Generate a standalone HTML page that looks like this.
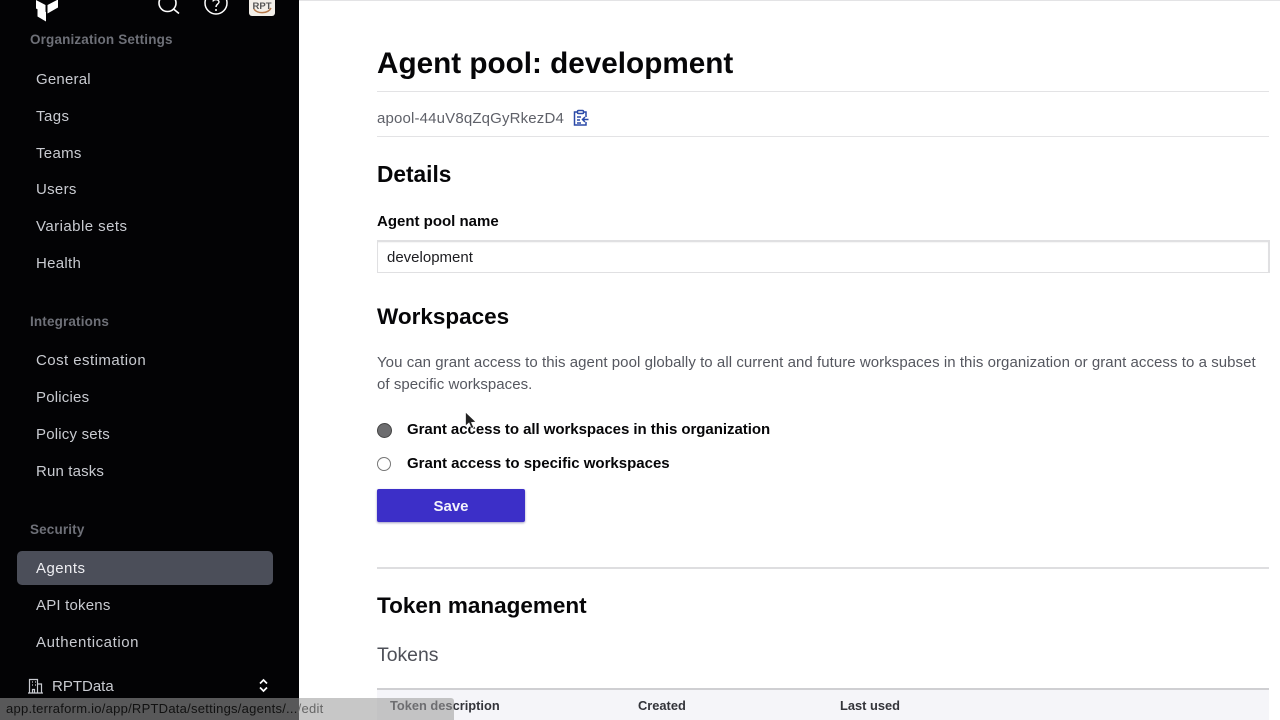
<!DOCTYPE html>
<html><head><meta charset="utf-8"><style>
html,body{margin:0;padding:0;width:1280px;height:720px;overflow:hidden;background:#fff;font-family:"Liberation Sans",Arial,sans-serif}
.t{position:absolute;white-space:nowrap;line-height:20px}
.s{color:#c9cbd1;font-size:15px;left:36px;letter-spacing:.45px}
.h{color:#6e7078;font-size:13.5px;font-weight:bold;left:30px;letter-spacing:.15px}
.b{font-weight:bold;color:#060608}
.l{position:absolute;background:#e3e3e5}
</style></head><body>
<div style="position:absolute;left:0;top:0;width:299px;height:720px;background:#030305"></div>
<svg style="position:absolute;left:0;top:0" width="299" height="24" viewBox="0 0 299 24">
<path d="M36 0L45.500 5V13.500L36 8.500Z" fill="#fff"/>
<path d="M47.500 5V13.500L58 7.500V0H57Z" fill="#fff"/>
<path d="M37.500 7.500L46 12V21.500L37.500 16.500Z" fill="#fff"/>
<circle cx="167.500" cy="3" r="8.500" fill="none" stroke="#fff" stroke-width="1.600"/><path d="M173.500 9L179 13.500" stroke="#fff" stroke-width="1.600"/>
<circle cx="216" cy="3" r="11" fill="none" stroke="#fff" stroke-width="1.500"/>
<path d="M213 1.500C213 -1 219 -1 219 2C219 4 216 4 216 7" fill="none" stroke="#fff" stroke-width="1.400"/><circle cx="216" cy="10" r="1" fill="#fff"/>
<rect x="249" y="-4" width="26" height="20" rx="3" fill="#f3efe9"/>
<path d="M254 9C257 14 268 14 271 8" fill="none" stroke="#b5784a" stroke-width="1.500"/>
<text x="262" y="9" font-size="9.500" font-weight="bold" text-anchor="middle" fill="#555" font-family="Liberation Sans">RPT</text>
</svg>
<div class="t h" style="top:30px">Organization Settings</div>
<div class="t s" style="top:70px;letter-spacing:.2px">General</div>
<div class="t s" style="top:107px">Tags</div>
<div class="t s" style="top:144px;letter-spacing:.3px">Teams</div>
<div class="t s" style="top:180px;letter-spacing:.3px">Users</div>
<div class="t s" style="top:217px">Variable sets</div>
<div class="t s" style="top:254px;letter-spacing:.3px">Health</div>
<div class="t h" style="top:312px">Integrations</div>
<div class="t s" style="top:351px">Cost estimation</div>
<div class="t s" style="top:388px;letter-spacing:.2px">Policies</div>
<div class="t s" style="top:425px;letter-spacing:.2px">Policy sets</div>
<div class="t s" style="top:462px;letter-spacing:.15px">Run tasks</div>
<div class="t h" style="top:520px">Security</div>
<div style="position:absolute;left:17px;top:551px;width:256px;height:34px;background:#4b4e59;border-radius:5px"></div>
<div class="t s" style="top:559px;color:#eeeef2">Agents</div>
<div class="t s" style="top:596px;letter-spacing:.2px">API tokens</div>
<div class="t s" style="top:633px;letter-spacing:.57px">Authentication</div>
<svg style="position:absolute;left:26px;top:677px" width="20" height="18" viewBox="0 0 20 18" fill="none" stroke="#c9cbd1" stroke-width="1.200">
<path d="M3.500 16V2.500H11.500V16M11.500 7H15.500V16M2 16H17M6.500 16V12.500H8.500V16"/><path d="M6 5H7M9 5H10M6 8H7M9 8H10" stroke-width="1.300"/></svg>
<div class="t s" style="top:677px;left:52px;letter-spacing:0">RPTData</div>
<svg style="position:absolute;left:257px;top:678px" width="13" height="15" viewBox="0 0 13 15" fill="none" stroke="#fff" stroke-width="1.700"><path d="M3 5.500L6.500 2L10 5.500M3 9.500L6.500 13L10 9.500"/></svg>

<div class="l" style="left:299px;top:0;width:981px;height:1px"></div>
<div class="t b" style="left:377px;top:44px;font-size:29.7px;line-height:40px">Agent pool: development</div>
<div class="l" style="left:377px;top:91px;width:892px;height:1px"></div>
<div class="t" style="left:377px;top:109px;font-size:15px;color:#5f6169;letter-spacing:.16px">apool-44uV8qZqGyRkezD4</div>
<svg style="position:absolute;left:572px;top:109px" width="18" height="18" viewBox="0 0 18 18" fill="none" stroke="#2b4aa8" stroke-width="1.500">
<path d="M5 3H2.500V16H14V13M14 8V3H11.500"/><rect x="5.500" y="1.500" width="6" height="3" rx="1"/><path d="M5 8H9M5 11H8M5 14H9M16.500 10.500H10.500M13 8L10.500 10.500L13 13"/></svg>
<div class="l" style="left:377px;top:136px;width:892px;height:1px"></div>
<div class="t b" style="left:377px;top:159px;font-size:22.7px;line-height:30px">Details</div>
<div class="t b" style="left:377px;top:212px;font-size:15px;">Agent pool name</div>
<div style="position:absolute;left:377px;top:240px;width:890px;height:30px;border:1px solid #e0e0e2;border-width:2px 2px 1px 1px;box-shadow:inset 0 1px 1px #f4f4f4;background:#fff"></div>
<div class="t" style="left:387px;top:248px;font-size:15px;color:#1c1c20">development</div>
<div class="t b" style="left:377px;top:302px;font-size:22.5px;line-height:30px">Workspaces</div>
<div class="t" style="left:377px;top:353px;font-size:15px;color:#55575f;letter-spacing:.053px">You can grant access to this agent pool globally to all current and future workspaces in this organization or grant access to a subset</div>
<div class="t" style="left:377px;top:375px;font-size:15px;color:#55575f;letter-spacing:.05px">of specific workspaces.</div>
<div style="position:absolute;left:377px;top:423px;width:13px;height:13px;border-radius:50%;background:#6d6d6f;border:1px solid #444"></div>
<div class="t b" style="left:407px;top:420px;font-size:15px;letter-spacing:-.04px">Grant access to all workspaces in this organization</div>
<div style="position:absolute;left:377px;top:457px;width:12px;height:12px;border-radius:50%;background:#fff;border:1px solid #777"></div>
<div class="t b" style="left:407px;top:454px;font-size:15px">Grant access to specific workspaces</div>
<svg style="position:absolute;left:464px;top:411px" width="14" height="20" viewBox="0 0 14 20"><path d="M1.500 1V15L5 12L7.500 17.500L9.800 16.500L7.500 11.500L12 11Z" fill="#222" stroke="#fff" stroke-width=".7"/></svg>
<div style="position:absolute;left:377px;top:489px;width:148px;height:33px;background:#3c2fc8;border-radius:2px;box-shadow:0 1px 2px rgba(40,30,120,.45)"></div>
<div class="t" style="left:377px;top:497px;width:148px;text-align:center;font-size:15px;font-weight:bold;color:#f2f2fb">Save</div>
<div class="l" style="left:377px;top:567px;width:892px;height:2px;background:#dedee0"></div>
<div class="t b" style="left:377px;top:591px;font-size:22.5px;line-height:30px">Token management</div>
<div class="t" style="left:377px;top:643px;font-size:19.4px;line-height:24px;color:#4e5058">Tokens</div>
<div style="position:absolute;left:377px;top:688px;width:892px;height:32px;background:#f5f5f9;border-top:2px solid #cfcfd2;box-sizing:border-box"></div>
<div class="t" style="left:390px;top:696px;font-size:12.85px;font-weight:bold;color:#33343a">Token description</div>
<div class="t" style="left:638px;top:696px;font-size:12.85px;font-weight:bold;color:#33343a">Created</div>
<div class="t" style="left:840px;top:696px;font-size:12.85px;font-weight:bold;color:#33343a">Last used</div>
<div style="position:absolute;left:0;top:698px;width:454px;height:22px;background:rgba(155,155,155,.56);border-top-right-radius:3px"></div>
<div class="t" style="left:6px;top:699px;font-size:13px;letter-spacing:.25px;color:#111">app.terraform.io/app/RPTData/settings/agents/...<span style="color:#666">/edit</span></div>
</body></html>
